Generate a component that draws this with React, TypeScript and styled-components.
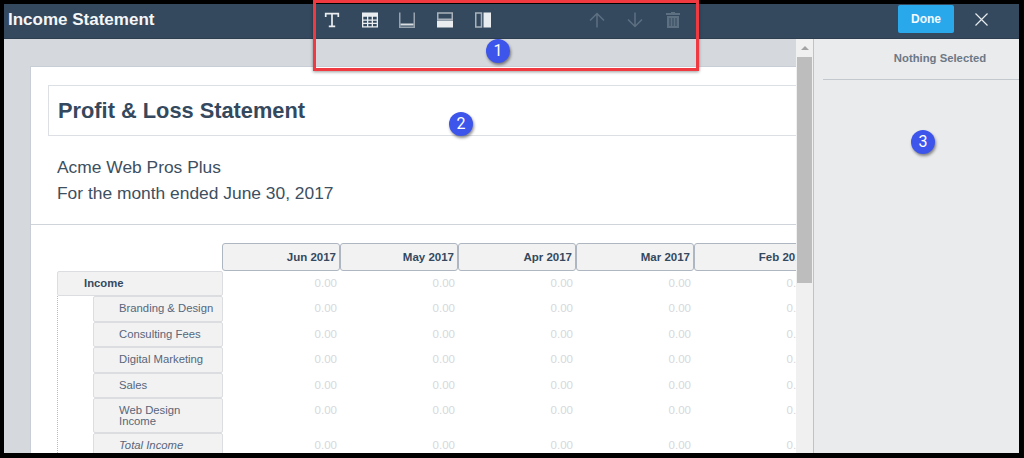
import React from "react";
import styled, { createGlobalStyle } from "styled-components";

const GlobalStyle = createGlobalStyle`
  html, body {
    margin: 0;
    height: 100%;
    background: #000;
    overflow: hidden;
  }
  * {
    box-sizing: border-box;
  }
`;

const Frame = styled.div`
  position: relative;
  width: 1024px;
  height: 458px;
  padding: 4px 5px 5px 4px;
  background: #000;
  font-family: "Liberation Sans", Arial, sans-serif;
`;

const Modal = styled.div`
  display: flex;
  flex-direction: column;
  height: 100%;
  overflow: hidden;
  background: #eaebed;
`;

const Header = styled.header`
  display: flex;
  align-items: center;
  flex: 0 0 35px;
  padding-bottom: 4px;
  background: #34495e;
  border-bottom: 1px solid #2c3e50;
`;

const Title = styled.h1`
  flex: 0 0 309px;
  margin: 0;
  padding: 1px 0 0 4px;
  font-size: 17px;
  font-weight: 700;
  color: #f4f6f8;
`;

const Tools = styled.div`
  display: flex;
  align-items: center;
  flex: 1;
`;

const ToolButton = styled.span<{ $gapBefore?: boolean; $dim?: boolean }>`
  display: flex;
  align-items: center;
  justify-content: center;
  width: 37.7px;
  height: 20px;
  padding-top: 1px;
  margin-left: ${(p) => (p.$gapBefore ? "77px" : "0")};
  color: ${(p) => (p.$dim ? "#5d7082" : "#e9edf0")};
`;

const DoneButton = styled.button`
  width: 56px;
  height: 28px;
  margin-right: 8px;
  border: 0;
  border-radius: 2px;
  background: #2aa8ec;
  color: #f4faff;
  font: 700 12px "Liberation Sans", Arial, sans-serif;
`;

const CloseButton = styled.span`
  display: flex;
  align-items: center;
  justify-content: center;
  width: 38px;
  margin-right: 19px;
  color: #e6eaee;
`;

const Body = styled.div`
  display: flex;
  flex: 1;
  min-height: 0;
`;

const Canvas = styled.main`
  flex: 0 0 792px;
  padding: 27px 0 0 26px;
  overflow: hidden;
  background: #d5d8dc;
`;

const Paper = styled.section`
  width: 800px;
  height: 400px;
  padding-top: 18px;
  background: #fff;
  border-top: 1px solid #c9ced6;
  border-left: 1px solid #c9ced6;
`;

const TitleBox = styled.div`
  height: 51px;
  margin-left: 17px;
  padding-left: 9px;
  border: 1px solid #dcdfe3;
  border-right: 0;
  font-size: 21.8px;
  font-weight: 700;
  line-height: 49px;
  color: #34495e;
`;

const Company = styled.div`
  padding: 18px 0 18px 26px;
  border-bottom: 1px solid #cfd3da;
  font-size: 17.4px;
  line-height: 26px;
  color: #3d4f61;
`;

const Table = styled.div`
  margin: 18px 0 0 26px;
`;

const Row = styled.div`
  display: flex;
`;

const HeaderRow = styled(Row)`
  padding-left: 165px;
`;

const ColumnHead = styled.div`
  flex: 0 0 118px;
  height: 28px;
  padding-right: 3px;
  border: 1px solid #aeb6c2;
  border-radius: 3px;
  background: #f2f2f3;
  font-size: 11.5px;
  font-weight: 700;
  line-height: 26px;
  text-align: right;
  color: #34495e;
`;

const LabelCell = styled.div<{ $depth: number; $tall?: boolean; $italic?: boolean; $bold?: boolean }>`
  flex: 0 0 ${(p) => (p.$depth ? 130 : 166)}px;
  height: ${(p) => (p.$tall ? 35.5 : 25.4)}px;
  margin-left: ${(p) => (p.$depth ? 36 : 0)}px;
  padding: ${(p) => (p.$tall ? "6px" : "2px")} 4px 0 ${(p) => (p.$depth ? 25 : 26)}px;
  border: 1px solid #dcdde0;
  border-radius: 2px;
  background: #f2f2f3;
  font-size: 11.3px;
  font-style: ${(p) => (p.$italic ? "italic" : "normal")};
  font-weight: ${(p) => (p.$bold ? 700 : 400)};
  line-height: ${(p) => (p.$tall ? "11px" : "18px")};
  color: ${(p) => (p.$bold ? "#34495e" : "#57667a")};
`;

const Amount = styled.div`
  flex: 0 0 118px;
  padding: 5px 4px 0 0;
  font-size: 11.5px;
  line-height: 14px;
  text-align: right;
  color: #d5d8dd;
`;

const Guide = styled.div`
  position: absolute;
  top: 296px;
  bottom: 5px;
  left: 57px;
  border-left: 1px dotted #b5bbc3;
`;

const Scrollbar = styled.div`
  flex: 0 0 17px;
  display: flex;
  flex-direction: column;
  align-items: center;
  background: #f0f0f0;
`;

const ScrollArrow = styled.div`
  margin: 7px 0 7px;
  border-left: 4px solid transparent;
  border-right: 4px solid transparent;
  border-bottom: 4px solid #a3a3a3;
`;

const ScrollThumb = styled.div`
  width: 15px;
  height: 226px;
  background: #bdbdbd;
`;

const Inspector = styled.aside`
  flex: 1;
  padding: 0 0 0 9px;
  border-left: 1px solid #bfc2c6;
  background: #eaebed;
`;

const InspectorTitle = styled.div`
  height: 41px;
  padding: 9px 0 0 38px;
  border-bottom: 1px solid #c3c8cf;
  font-size: 11.3px;
  font-weight: 700;
  line-height: 20px;
  text-align: center;
  color: #6d7885;
`;

const Callout = styled.div`
  position: absolute;
  width: 24px;
  height: 24px;
  border-radius: 50%;
  background: #3d55ea;
  box-shadow: 1px 2px 3px rgba(0, 0, 0, 0.45);
  color: #fff;
  font: 400 16px/24px Roboto, "Liberation Sans", sans-serif;
  text-align: center;
`;

const Highlight = styled.div`
  position: absolute;
  left: 313px;
  top: 0;
  width: 386px;
  height: 71px;
  border: 3px solid #ee3a40;
  box-shadow: 0 1px 3px rgba(0, 0, 0, 0.4);
`;

const TextIcon = () => (
  <svg width="16" height="16" viewBox="0 0 16 16" fill="none" stroke="currentColor">
    <path d="M1.7 5V1.7h12.6V5M8 1.7v12.6M4.8 14.3h6.4" strokeWidth="1.7" />
  </svg>
);

const TableIcon = () => (
  <svg width="16" height="16" viewBox="0 0 16 16" fill="currentColor">
    <path
      d="M0 .5h16v15H0zM1.3 4.8v2.6H5V4.8zm5 0v2.6h3.4V4.8zm4.7 0v2.6h3.7V4.8zM1.3 8.7v2.1H5V8.7zm5 0v2.1h3.4V8.7zm4.7 0v2.1h3.7V8.7zM1.3 12.1v2.1H5v-2.1zm5 0v2.1h3.4v-2.1zm4.7 0v2.1h3.7v-2.1z"
      fillRule="evenodd"
    />
  </svg>
);

const FooterIcon = () => (
  <svg width="16" height="16" viewBox="0 0 16 16" fill="none">
    <path d="M.75.5v14.75h14.5V.5" stroke="currentColor" strokeWidth="1.5" opacity=".55" />
    <rect x="1.5" y="11.5" width="13" height="2" fill="currentColor" opacity=".9" />
  </svg>
);

const RowsIcon = () => (
  <svg width="16" height="16" viewBox="0 0 16 16" fill="none">
    <rect x=".75" y="1" width="14.5" height="6.25" stroke="currentColor" strokeWidth="1.5" opacity=".65" />
    <rect y="8.5" width="16" height="7" fill="currentColor" />
  </svg>
);

const ColumnsIcon = () => (
  <svg width="16" height="16" viewBox="0 0 16 16" fill="none">
    <rect x=".75" y="1" width="5.75" height="14" stroke="currentColor" strokeWidth="1.5" opacity=".65" />
    <rect x="8.5" y=".5" width="7.5" height="15" fill="currentColor" />
  </svg>
);

const UpIcon = () => (
  <svg width="16" height="16" viewBox="0 0 16 16" fill="none" stroke="currentColor" strokeWidth="1.5">
    <path d="M8 15.5V1.5M1 8.5l7-7 7 7" />
  </svg>
);

const DownIcon = () => (
  <svg width="16" height="16" viewBox="0 0 16 16" fill="none" stroke="currentColor" strokeWidth="1.5">
    <path d="M8 .5v14M1 7.5l7 7 7-7" />
  </svg>
);

const TrashIcon = () => (
  <svg width="14" height="16" viewBox="0 0 14 16" fill="currentColor">
    <path d="M5 0h4v1h5v2H0V1h5zM1 4h12v12H1zM3.5 6v8h1V6zm3 0v8h1V6zm3 0v8h1V6z" fillRule="evenodd" />
  </svg>
);

const CloseIcon = () => (
  <svg width="13" height="13" viewBox="0 0 13 13" fill="none" stroke="currentColor" strokeWidth="1.2">
    <path d="M.5.5l12 12M12.5.5l-12 12" />
  </svg>
);

const months = ["Jun 2017", "May 2017", "Apr 2017", "Mar 2017", "Feb 2017"];

const rows = [
  { label: "Income", depth: 0, bold: true },
  { label: "Branding & Design", depth: 1 },
  { label: "Consulting Fees", depth: 1 },
  { label: "Digital Marketing", depth: 1 },
  { label: "Sales", depth: 1 },
  { label: "Web Design Income", depth: 1, tall: true },
  { label: "Total Income", depth: 1, italic: true },
];

const App = () => {
  return (
    <Frame>
      <GlobalStyle />
      <Modal>
        <Header>
          <Title>Income Statement</Title>
          <Tools>
            <ToolButton><TextIcon /></ToolButton>
            <ToolButton><TableIcon /></ToolButton>
            <ToolButton><FooterIcon /></ToolButton>
            <ToolButton><RowsIcon /></ToolButton>
            <ToolButton><ColumnsIcon /></ToolButton>
            <ToolButton $dim $gapBefore><UpIcon /></ToolButton>
            <ToolButton $dim><DownIcon /></ToolButton>
            <ToolButton $dim><TrashIcon /></ToolButton>
          </Tools>
          <DoneButton>Done</DoneButton>
          <CloseButton><CloseIcon /></CloseButton>
        </Header>
        <Body>
          <Canvas>
            <Paper>
              <TitleBox>Profit &amp; Loss Statement</TitleBox>
              <Company>
                Acme Web Pros Plus
                <br />
                For the month ended June 30, 2017
              </Company>
              <Table>
                <HeaderRow>
                  {months.map((m) => (
                    <ColumnHead key={m}>{m}</ColumnHead>
                  ))}
                </HeaderRow>
                {rows.map((r) => (
                  <Row key={r.label}>
                    <LabelCell $depth={r.depth} $bold={r.bold} $tall={r.tall} $italic={r.italic}>
                      {r.label}
                    </LabelCell>
                    {months.map((m) => (
                      <Amount key={m}>0.00</Amount>
                    ))}
                  </Row>
                ))}
              </Table>
            </Paper>
          </Canvas>
          <Scrollbar>
            <ScrollArrow />
            <ScrollThumb />
          </Scrollbar>
          <Inspector>
            <InspectorTitle>Nothing Selected</InspectorTitle>
          </Inspector>
        </Body>
      </Modal>
      <Guide />
      <Highlight />
      <Callout style={{ left: 486, top: 39 }}>1</Callout>
      <Callout style={{ left: 449, top: 112 }}>2</Callout>
      <Callout style={{ left: 911, top: 130 }}>3</Callout>
    </Frame>
  );
};

export default App;
